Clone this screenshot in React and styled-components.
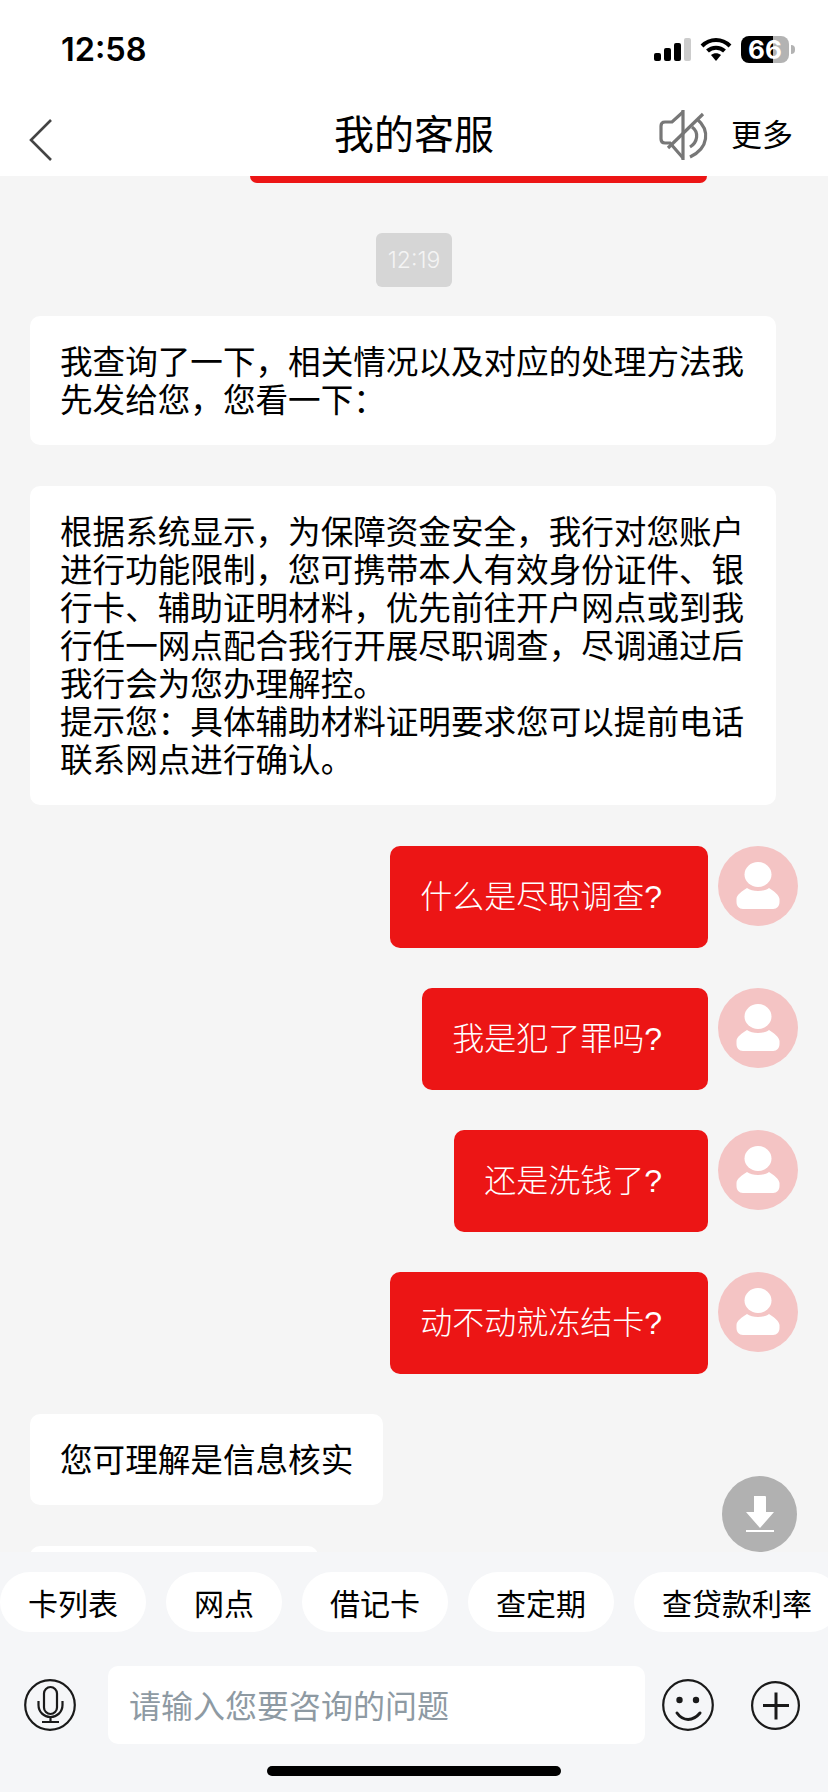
import React from 'react';
import styled, { createGlobalStyle } from 'styled-components';

const GlobalStyle = createGlobalStyle`
	html, body {
		margin: 0;
		padding: 0;
		background: #f5f5f5;
	}
	* {
		box-sizing: border-box;
	}
`;

const Page = styled.div`
	position: relative;
	width: 828px;
	height: 1792px;
	display: flex;
	flex-direction: column;
	overflow: hidden;
	background: #f5f5f5;
	color: #000;
	font-family: 'Noto Sans CJK SC', 'Liberation Sans', sans-serif;
`;

const Top = styled.div`
	height: 176px;
	flex: none;
	background: #fff;
	display: flex;
	flex-direction: column;
`;

const StatusBar = styled.div`
	height: 94px;
	padding: 31px 39px 0 61px;
	display: flex;
	justify-content: space-between;
	align-items: flex-start;
`;

const Clock = styled.div`
	font-family: Inter, 'Liberation Sans', sans-serif;
	font-size: 32.5px;
	line-height: 38px;
	font-weight: 600;
`;

const StatusIcons = styled.div`
	display: flex;
	align-items: center;
	gap: 9px;
	padding-top: 5px;
`;

const Battery = styled.div`
	position: relative;
	width: 48px;
	height: 27px;
	border-radius: 8px;
	background: linear-gradient(90deg, #000 66.7%, #b3b3b3 66.7%);
	color: #fff;
	font-family: Inter, 'Liberation Sans', sans-serif;
	font-size: 26px;
	font-weight: 700;
	line-height: 27px;
	text-align: center;
	&::after {
		content: '';
		position: absolute;
		left: 50px;
		top: 9px;
		width: 4px;
		height: 9px;
		border-radius: 0 4px 4px 0;
		background: #b3b3b3;
	}
`;

const NavBar = styled.div`
	flex: 1;
	position: relative;
	display: flex;
	align-items: center;
	justify-content: space-between;
	padding: 0 35px 0 29px;
`;

const BackIcon = styled.svg`
	margin-top: 10px;
`;

const Title = styled.div`
	position: absolute;
	left: 0;
	right: 0;
	padding-bottom: 6px;
	text-align: center;
	font-size: 40px;
	line-height: 50px;
`;

const NavRight = styled.div`
	display: flex;
	align-items: center;
	gap: 22px;
`;

const More = styled.div`
	padding-bottom: 4px;
	font-size: 31px;
	line-height: 40px;
`;

const Chat = styled.div`
	position: relative;
	flex: 1;
	min-height: 0;
	overflow: hidden;
	padding: 0 30px;
	display: flex;
	flex-direction: column;
	gap: 40px;
	align-items: flex-start;
`;

const Fragment = styled.div`
	flex: none;
	align-self: flex-end;
	margin-right: 91px;
	width: 457px;
	height: 7px;
	background: #ec1515;
	border-radius: 0 0 10px 10px;
`;

const TimeChip = styled.div`
	flex: none;
	align-self: center;
	margin: 10px 0 -11px;
	width: 76px;
	height: 54px;
	border-radius: 6px;
	background: #d6d6d6;
	color: #f4f4f4;
	font-family: Inter, 'Liberation Sans', sans-serif;
	font-size: 23px;
	font-weight: 300;
	line-height: 54px;
	text-align: center;
`;

const Bubble = styled.div`
	flex: none;
	width: ${(props) => props.$width || 'auto'};
	max-width: 746px;
	margin-bottom: 1px;
	padding: 25px 30px 28px 30px;
	border-radius: 10px;
	background: #fff;
	font-size: 32.6px;
	line-height: 38px;
`;

const SentRow = styled.div`
	flex: none;
	align-self: flex-end;
	display: flex;
	align-items: flex-start;
	gap: 10px;
`;

const SentBubble = styled.div`
	height: 102px;
	padding: 32px 46px 32px 30px;
	border-radius: 10px;
	background: #ec1515;
	color: #fff;
	font-family: 'Liberation Sans', 'Noto Sans CJK SC', sans-serif;
	font-size: 32px;
	font-weight: 300;
	line-height: 38px;
`;

const Avatar = styled.div`
	width: 80px;
	height: 80px;
	border-radius: 50%;
	background: #f4c4c4;
	display: flex;
	align-items: center;
	justify-content: center;
`;

const ScrollButton = styled.div`
	position: absolute;
	right: 31px;
	bottom: 0;
	width: 75px;
	height: 76px;
	border-radius: 50%;
	background: #b1b1b1;
	display: flex;
	align-items: center;
	justify-content: center;
`;

const Bottom = styled.div`
	flex: none;
	height: 240px;
	background: #f5f6f8;
	display: flex;
	flex-direction: column;
`;

const Chips = styled.div`
	display: flex;
	gap: 20px;
	padding-top: 20px;
	overflow: hidden;
`;

const Chip = styled.div`
	flex: none;
	height: 60px;
	padding: 0 28px;
	border-radius: 30px;
	background: #fff;
	font-size: 30px;
	line-height: 60px;
`;

const InputRow = styled.div`
	display: flex;
	align-items: center;
	margin-top: 34px;
	padding-left: 24px;
`;

const IconSlot = styled.div`
	flex: none;
	display: flex;
	margin: ${(props) => props.$margin || '0'};
`;

const InputBox = styled.div`
	flex: none;
	width: 537px;
	height: 78px;
	margin-left: 32px;
	padding-left: 21px;
	border-radius: 10px;
	background: #fff;
	color: #8e9aa3;
	font-size: 32px;
	line-height: 76px;
`;

const HomeBar = styled.div`
	width: 294px;
	height: 10px;
	margin: 22px auto 0;
	border-radius: 5px;
	background: #000;
`;

const SENT = ['什么是尽职调查?', '我是犯了罪吗?', '还是洗钱了?', '动不动就冻结卡?'];
const CHIPS = ['卡列表', '网点', '借记卡', '查定期', '查贷款利率'];
// full-width punctuation
const FIRST = '我查询了一下\uFF0C相关情况以及对应的处理方法我先发给您\uFF0C您看一下\uFF1A';
const SECOND =
	'根据系统显示\uFF0C为保障资金安全\uFF0C我行对您账户进行功能限制\uFF0C您可携带本人有效身份证件、银行卡、辅助证明材料\uFF0C优先前往开户网点或到我行任一网点配合我行开展尽职调查\uFF0C尽调通过后我行会为您办理解控。';
const THIRD = '提示您\uFF1A具体辅助材料证明要求您可以提前电话联系网点进行确认。';

const PersonIcon = () => (
	<svg width="46" height="50" viewBox="0 0 46 50" fill="#fff">
		<ellipse cx="23" cy="13.5" rx="13.5" ry="12.5" />
		<path d="M12 27 C17 31 29 31 34 27 C39 30 44 34 44.500 38 V41 C44.500 45 42 48 38 48 H8 C4 48 1.500 45 1.500 41 V38 C1.500 34 7 30 12 27 Z" />
	</svg>
);

export default function App() {
	return (
		<Page>
			<GlobalStyle />
			<Top>
				<StatusBar>
					<Clock>12:58</Clock>
					<StatusIcons>
						<svg width="37" height="23" viewBox="0 0 37 23">
							<rect x="0" y="15" width="7" height="8" rx="2" fill="#000" />
							<rect x="10" y="10" width="7" height="13" rx="2" fill="#000" />
							<rect x="20" y="5" width="7" height="18" rx="2" fill="#000" />
							<rect x="30" y="0" width="7" height="23" rx="2" fill="#ccc" />
						</svg>
						<svg width="32" height="24" viewBox="0 0 32 24">
							<path d="M2 8 C10 0 22 0 30 8" fill="none" stroke="#000" strokeWidth="4" />
							<path d="M7.500 13 C12 8.500 20 8.500 24.500 13" fill="none" stroke="#000" strokeWidth="4" />
							<path d="M11 17 C14 14.500 18 14.500 21 17 L16 23 Z" fill="#000" />
						</svg>
						<Battery>66</Battery>
					</StatusIcons>
				</StatusBar>
				<NavBar>
					<BackIcon width="23" height="42" viewBox="0 0 23 42" fill="none" stroke="#444" strokeWidth="2.600">
						<path d="M22 1 L2 21 L22 41" />
					</BackIcon>
					<Title>我的客服</Title>
					<NavRight>
						<svg width="50" height="50" viewBox="0 0 50 50" fill="none" stroke="#777" strokeWidth="3.200">
							<path d="M24 0 V50" />
							<path d="M24 2 L13 12 H6 Q2 12 2 16 V29 Q2 33 6 33 H11 L24 48" />
							<path d="M9 38 L44 4" />
							<path d="M33 17 C40 22 39 32 31 37" />
							<path d="M38 9 C51 20 50 38 31 47" />
						</svg>
						<More>更多</More>
					</NavRight>
				</NavBar>
			</Top>
			<Chat>
				<Fragment />
				<TimeChip>12:19</TimeChip>
				<Bubble>{FIRST}</Bubble>
				<Bubble>
					{SECOND}
					<br />
					{THIRD}
				</Bubble>
				{SENT.map((text) => (
					<SentRow key={text}>
						<SentBubble>{text}</SentBubble>
						<Avatar>
							<PersonIcon />
						</Avatar>
					</SentRow>
				))}
				<Bubble>您可理解是信息核实</Bubble>
				<Bubble $width="288px">&nbsp;</Bubble>
				<ScrollButton>
					<svg width="28" height="36" viewBox="0 0 28 36" fill="#fff">
						<path d="M8 0 Q8 0 9 0 H19 Q20 0 20 1 V16 H28 L14 32 L0 16 H8 Z" />
						<rect x="0" y="34" width="28" height="2" />
					</svg>
				</ScrollButton>
			</Chat>
			<Bottom>
				<Chips>
					{CHIPS.map((c) => (
						<Chip key={c}>{c}</Chip>
					))}
				</Chips>
				<InputRow>
					<IconSlot>
						<svg width="52" height="52" viewBox="0 0 52 52" fill="none" stroke="#1a1a1a" strokeWidth="2.200">
							<circle cx="26" cy="26" r="24.800" />
							<rect x="20" y="8" width="13" height="27" rx="6.500" />
							<path d="M14.500 22 V26 C14.500 33 20 38 26.500 38 C33 38 38.500 33 38.500 26 V22" />
							<path d="M26.500 38 V43 M18 43 H35" />
						</svg>
					</IconSlot>
					<InputBox>请输入您要咨询的问题</InputBox>
					<IconSlot $margin="0 0 0 17px">
						<svg width="52" height="52" viewBox="0 0 52 52" fill="none" stroke="#1a1a1a" strokeWidth="2.200">
							<circle cx="26" cy="26" r="24.800" />
							<circle cx="17.500" cy="21" r="3.200" fill="#1a1a1a" stroke="none" />
							<circle cx="34" cy="21" r="3.200" fill="#1a1a1a" stroke="none" />
							<path d="M15 34 C21 42.500 31 42.500 38 34" strokeWidth="3" strokeLinecap="round" />
						</svg>
					</IconSlot>
					<IconSlot $margin="0 0 0 37px">
						<svg width="49" height="49" viewBox="0 0 49 49" fill="none" stroke="#1a1a1a" strokeWidth="2.200">
							<circle cx="24.500" cy="24.500" r="23.400" />
							<path d="M12 24.500 H38 M25 11.500 V38.500" strokeWidth="3" />
						</svg>
					</IconSlot>
				</InputRow>
				<HomeBar />
			</Bottom>
		</Page>
	);
}
